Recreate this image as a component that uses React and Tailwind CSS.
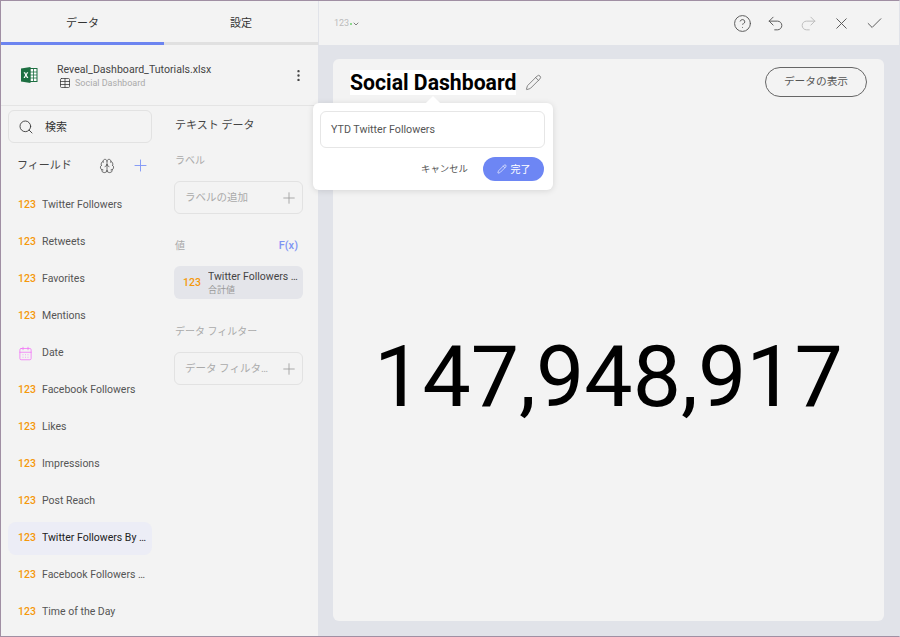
import React from 'react';
import { Search, Brain, Plus, Pencil, CircleHelp, Undo2, Redo2, X, Check, CalendarDays, Table, EllipsisVertical, ChevronDown } from 'lucide-react';

const fields = [
  { name: 'Twitter Followers' },
  { name: 'Retweets' },
  { name: 'Favorites' },
  { name: 'Mentions' },
  { name: 'Date', date: true },
  { name: 'Facebook Followers' },
  { name: 'Likes' },
  { name: 'Impressions' },
  { name: 'Post Reach' },
  { name: 'Twitter Followers By Day', active: true },
  { name: 'Facebook Followers By Day' },
  { name: 'Time of the Day' },
];

function ExcelIcon() {
  return (
    <svg width="18" height="18" viewBox="0 0 18 18">
      <rect x="7" y="2.5" width="10" height="13" fill="#fff" stroke="#1d6f42" strokeWidth="1" />
      <path d="M10 3v12M13.5 3v12M7 6h10M7 9h10M7 12h10" stroke="#1d6f42" strokeWidth="0.8" />
      <path d="M1 2.5 10.5 1v16L1 15.5z" fill="#1d6f42" />
      <path d="M3.6 6.2h1.5l.9 1.8.9-1.8h1.4L6.7 9l1.7 2.9H6.9L5.9 10l-1 1.9H3.5L5.2 9z" fill="#fff" />
    </svg>
  );
}

function FieldRow({ field }) {
  return (
    <div className={`flex h-[33px] w-[144px] shrink-0 items-center rounded-lg pb-[1px] pl-[10px] ${field.active ? 'bg-[#ecedf6] text-[#222]' : 'text-[#555]'}`}>
      <div className="flex w-[24px] shrink-0 items-center">
        {field.date
          ? <CalendarDays size={15} strokeWidth={1.2} className="text-[#f06ef5]" />
          : <span className="text-[10.5px] font-medium text-[#f5980c]">123</span>}
      </div>
      <span className="truncate pr-1 text-[10.5px]">{field.name}</span>
    </div>
  );
}

function DropBox({ label }) {
  return (
    <div className="flex h-[33px] items-center justify-between rounded-md border border-[#e2e2e2] pl-[10px] pr-[4px] text-[#aaa]">
      <span className="max-w-[84px] truncate text-[10.5px]">{label}</span>
      <Plus size={18} strokeWidth={1.1} className="shrink-0 text-[#999]" />
    </div>
  );
}

export default function App() {
  return (
    <div className="relative flex h-[637px] w-[900px] overflow-hidden border-x border-y border-[#a08fa3] border-r-[#e1e3e9] bg-[#e1e3e9] text-[#444] [font-family:Roboto,'Noto_Sans_CJK_JP',sans-serif]">
      <aside className="flex w-[317px] shrink-0 flex-col bg-[#f3f3f3]">
        <div className="flex h-[44px] shrink-0 text-[11px] text-[#333]">
          <div className="flex w-[163px] items-center justify-center border-b-[3px] border-[#6c84f0] pt-[5px]">データ</div>
          <div className="flex flex-1 items-center justify-center border-b-[3px] border-[#e0e0e0] pt-[5px]">設定</div>
        </div>
        <div className="flex h-[61px] shrink-0 items-center border-b border-[#e4e4e4] pl-[19px] pr-[12px]">
          <ExcelIcon />
          <div className="ml-[19px] flex-1">
            <div className="pt-[1px] text-[10.6px] leading-[15px] text-[#444]">Reveal_Dashboard_Tutorials.xlsx</div>
            <div className="flex items-center gap-[4px] text-[9px] leading-[12px] text-[#aaa]">
              <Table size={12} strokeWidth={1.5} className="ml-[2px] text-[#333]" />
              Social Dashboard
            </div>
          </div>
          <EllipsisVertical size={15} strokeWidth={1.8} className="text-[#444]" />
        </div>
        <div className="flex min-h-0 flex-1 pl-[7px] pt-[4px]">
          <div className="flex w-[144px] shrink-0 flex-col">
            <div className="flex h-[33px] shrink-0 items-center rounded-md border border-[#e2e2e2] pl-[9px] text-[11px] text-[#333]">
              <Search size={16} strokeWidth={1.3} />
              <span className="ml-[11px] pt-[4px]">検索</span>
            </div>
            <div className="mt-[6px] flex h-[32px] shrink-0 items-center pl-[9px] pt-[1px] text-[11px]">
              <span className="w-[82px] shrink-0 pt-[2px]">フィールド</span>
              <Brain size={16} strokeWidth={1.1} />
              <Plus size={19} strokeWidth={1.2} className="ml-[16px] text-[#8298f5]" />
            </div>
            <div className="mt-[8px] flex flex-col gap-[4px]">
              {fields.map((f) => <FieldRow key={f.name} field={f} />)}
            </div>
          </div>
          <div className="ml-[22px] flex w-[129px] shrink-0 flex-col">
            <div className="ml-[1px] mt-[8px] text-[11px] leading-[16px]">テキスト データ</div>
            <div className="ml-[1px] mt-[20px] text-[10px] leading-[14px] text-[#aaa]">ラベル</div>
            <div className="mt-[13px]"><DropBox label="ラベルの追加" /></div>
            <div className="mt-[25px] flex items-center justify-between pl-[1px] pr-[5px] leading-[14px]">
              <span className="text-[10px] text-[#aaa]">値</span>
              <span className="text-[11px] font-medium text-[#7e93f3]">F(x)</span>
            </div>
            <div className="mt-[13px] flex h-[33px] items-center rounded-md bg-[#e4e5ea] pl-[9px]">
              <span className="w-[25px] shrink-0 text-[10.5px] font-medium text-[#f5980c]">123</span>
              <div className="min-w-0 flex-1 pr-[4px]">
                <div className="truncate text-[10.5px] leading-[14px] text-[#444]">Twitter Followers By Day</div>
                <div className="text-[9px] leading-[12px] text-[#999]">合計値</div>
              </div>
            </div>
            <div className="ml-[1px] mt-[26px] text-[10px] leading-[14px] text-[#aaa]">データ フィルター</div>
            <div className="mt-[13px]"><DropBox label="データ フィルター" /></div>
          </div>
        </div>
      </aside>
      <main className="ml-[1px] flex min-w-0 flex-1 flex-col">
        <header className="flex h-[44px] shrink-0 items-center bg-[#f3f3f3] pl-[15px] pr-[15px] pt-[1px]">
          <span className="text-[9px] text-[#bbb]">123</span>
          <span className="ml-[1px] h-[2px] w-[2px] rounded-full bg-[#6fcf6f]" />
          <ChevronDown size={8} strokeWidth={2} className="text-[#444]" />
          <div className="ml-auto flex items-center gap-[14px] text-[#555]">
            <CircleHelp size={19} strokeWidth={1.2} />
            <Undo2 size={19} strokeWidth={1.2} />
            <Redo2 size={19} strokeWidth={1.2} className="text-[#bbb]" />
            <X size={19} strokeWidth={1.2} />
            <Check size={19} strokeWidth={1.2} />
          </div>
        </header>
        <section className="mb-[15px] ml-[14px] mr-[15px] mt-[14px] flex min-h-0 flex-1 flex-col rounded-md bg-[#f3f3f3]">
          <div className="flex items-start justify-between pl-[17px] pr-[17px] pt-[8px]">
            <div className="mt-[3px] flex items-center">
              <span className="bg-white text-[21.2px] font-bold leading-[25px] text-black">Social Dashboard</span>
              <Pencil size={17} strokeWidth={1.1} className="ml-[9px] text-[#666]" />
            </div>
            <button className="flex h-[30px] w-[102px] items-center justify-center rounded-full border border-[#666] text-[10.7px] text-[#555]">データの表示</button>
          </div>
          <div className="flex flex-1 items-center justify-center pt-[35px] text-[86px] leading-none text-black">147,948,917</div>
        </section>
      </main>
      <div className="absolute left-[312px] top-[102px] h-[87px] w-[240px] rounded-md bg-white py-[8px] pl-[7px] pr-[8px] shadow-[0_1px_6px_rgba(0,0,0,0.12)]">
        <div className="absolute -top-[5px] left-[115px] h-[10px] w-[10px] rotate-45 bg-white" />
        <div className="flex h-[37px] items-center rounded-md border border-[#e6e6e6] pl-[10px] pt-px text-[10.7px] text-[#555]">YTD Twitter Followers</div>
        <div className="mt-[9px] flex items-center justify-end pr-[1px]">
          <span className="text-[9.4px] text-[#555]">キャンセル</span>
          <button className="ml-[15px] flex h-[24px] w-[61px] items-center justify-center gap-[4px] rounded-full bg-[#6d86f4] text-[10px] text-white">
            <Pencil size={10} strokeWidth={1.5} />
            完了
          </button>
        </div>
      </div>
    </div>
  );
}
